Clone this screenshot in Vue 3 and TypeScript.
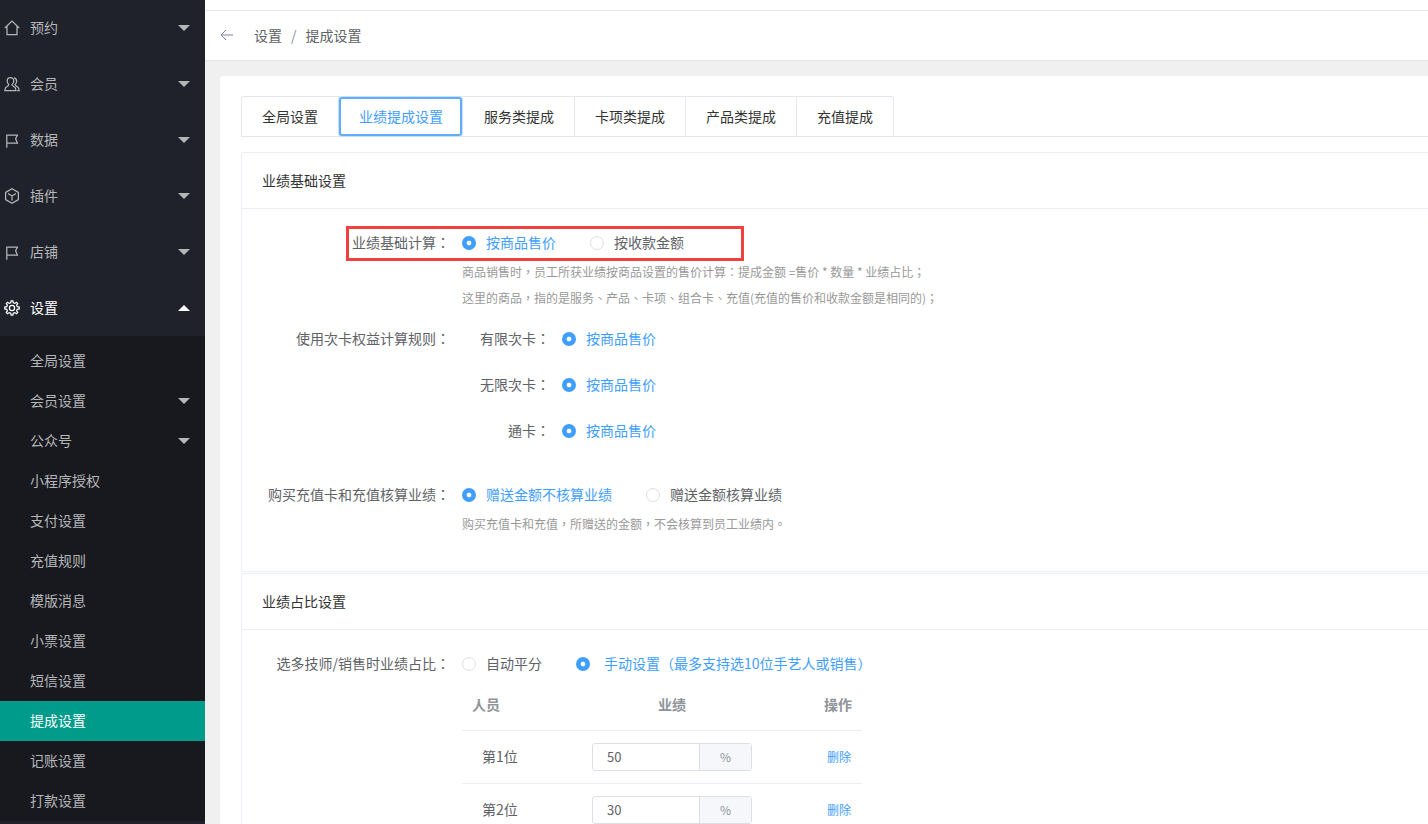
<script setup lang="ts">
const topMenu = [
  { name: '预约', icon: 'home' },
  { name: '会员', icon: 'user' },
  { name: '数据', icon: 'flag' },
  { name: '插件', icon: 'cube' },
  { name: '店铺', icon: 'flag' },
]
const subMenu = [
  { name: '全局设置' },
  { name: '会员设置', arrow: true },
  { name: '公众号', arrow: true },
  { name: '小程序授权' },
  { name: '支付设置' },
  { name: '充值规则' },
  { name: '模版消息' },
  { name: '小票设置' },
  { name: '短信设置' },
  { name: '提成设置', active: true },
  { name: '记账设置' },
  { name: '打款设置' },
]
const tabs = ['全局设置', '业绩提成设置', '服务类提成', '卡项类提成', '产品类提成', '充值提成']
const cardRules = ['有限次卡', '无限次卡', '通卡']
const ratios = [
  { name: '第1位', value: 50 },
  { name: '第2位', value: 30 },
]

function gearPath(): string {
  const teeth = 8
  const pts: string[] = []
  for (let i = 0; i < teeth; i++) {
    const a = (i / teeth) * Math.PI * 2
    const s = (Math.PI * 2) / teeth
    const p = (r: number, t: number) =>
      `${(8 + r * Math.cos(a + t * s)).toFixed(2)} ${(8 + r * Math.sin(a + t * s)).toFixed(2)}`
    pts.push(`${i === 0 ? 'M' : 'L'}${p(5.4, -0.3)}`, `L${p(7.3, -0.16)}`, `L${p(7.3, 0.16)}`, `L${p(5.4, 0.3)}`)
  }
  return pts.join(' ') + ' Z'
}
const gear = gearPath()
</script>

<template>
  <div class="page">
    <aside class="sidebar">
      <div v-for="m in topMenu" :key="m.name" class="top-item">
        <svg class="ico" viewBox="0 0 16 16" fill="none" stroke="currentColor" stroke-width="1.25">
          <template v-if="m.icon === 'home'">
            <path d="M.8 8 L8 1 L15.2 8 M3 6.5 V14.5 H13 V6.5" />
          </template>
          <template v-else-if="m.icon === 'user'">
            <path d="M6.5 1.5 C4.3 1.5 3.2 3.2 3.2 5 C3.2 6.6 4 7.8 4.8 8.6 C4.8 9.4 4.2 10 3 10.5 C1.6 11.1 1 12.2 .8 14.5 H12 C11.8 12.2 11.2 11.1 9.8 10.5 C8.6 10 8 9.4 8 8.6 C8.9 7.8 9.8 6.6 9.8 5 C9.8 3.2 8.7 1.5 6.5 1.5 Z" />
            <path d="M10 1.8 C12 2.3 12.8 3.8 12.6 5.5 C12.5 6.8 11.9 7.8 11.1 8.6 C11.2 9.4 11.8 9.9 12.9 10.4 C14.3 11 15 12.2 15.2 14.5 H13.2" />
          </template>
          <template v-else-if="m.icon === 'flag'">
            <path d="M2.8 15.8 V3 H13.4 L11.6 6.8 L13.4 11 H2.8" />
          </template>
          <template v-else>
            <path d="M8 .8 L14.4 4.4 V11.6 L8 15.2 L1.6 11.6 V4.4 Z M4 5.5 L8 8 L12 5.5 M8 8 V12.6" />
          </template>
        </svg>
        <span class="top-name">{{ m.name }}</span>
        <i class="arrow down"></i>
      </div>
      <div class="top-item open">
        <svg class="ico" viewBox="0 0 16 16" fill="none" stroke="currentColor" stroke-width="1.25">
          <circle cx="8" cy="8" r="2.6" />
          <path :d="gear" />
        </svg>
        <span class="top-name">设置</span>
        <i class="arrow up"></i>
      </div>
      <div class="sub-menu">
        <div v-for="s in subMenu" :key="s.name" class="sub-item" :class="{ active: s.active }">
          <span>{{ s.name }}</span>
          <i v-if="s.arrow" class="arrow down"></i>
        </div>
      </div>
    </aside>

    <main class="main">
      <div class="strip"></div>
      <div class="crumbs">
        <svg class="back" viewBox="0 0 14 12" fill="none" stroke="#7a84a0" stroke-width="1">
          <path d="M13 6 H1 M6 1 L1 6 L6 11" />
        </svg>
        <span class="crumb">设置</span>
        <span class="sep">/</span>
        <span class="crumb">提成设置</span>
      </div>

      <div class="content">
        <div class="panel">
          <div class="tabs">
            <div v-for="(t, i) in tabs" :key="t" class="tab" :class="{ current: i === 1 }">{{ t }}</div>
          </div>

          <section class="card">
            <h3 class="card-title">业绩基础设置</h3>
            <div class="card-body">
              <div class="form-row">
                <div class="highlight">
                  <label class="row-label">业绩基础计算：</label>
                  <span class="radio on"><i></i><b>按商品售价</b></span>
                  <span class="radio gap34"><i></i><b>按收款金额</b></span>
                </div>
              </div>
              <p class="hint h1">商品销售时，员工所获业绩按商品设置的售价计算：提成金额 =售价 * 数量 * 业绩占比；</p>
              <p class="hint">这里的商品，指的是服务、产品、卡项、组合卡、充值(充值的售价和收款金额是相同的)；</p>

              <div class="rules">
                <label class="row-label rules-label">使用次卡权益计算规则：</label>
                <div class="rules-list">
                  <div v-for="r in cardRules" :key="r" class="rule">
                    <label class="rule-label">{{ r }}：</label>
                    <span class="radio on"><i></i><b>按商品售价</b></span>
                  </div>
                </div>
              </div>

              <div class="form-row recharge">
                <label class="row-label">购买充值卡和充值核算业绩：</label>
                <span class="radio on"><i></i><b>赠送金额不核算业绩</b></span>
                <span class="radio gap34"><i></i><b>赠送金额核算业绩</b></span>
              </div>
              <p class="hint h2">购买充值卡和充值，所赠送的金额，不会核算到员工业绩内。</p>
            </div>
          </section>

          <section class="card second">
            <h3 class="card-title">业绩占比设置</h3>
            <div class="card-body">
              <div class="form-row">
                <label class="row-label">选多技师/销售时业绩占比：</label>
                <span class="radio"><i></i><b>自动平分</b></span>
                <span class="radio gap34 on wide"><i></i><b>手动设置（最多支持选10位手艺人或销售）</b></span>
              </div>
              <div class="table">
                <div class="thead">
                  <span class="c1">人员</span>
                  <span class="c2">业绩</span>
                  <span class="c3">操作</span>
                </div>
                <div v-for="x in ratios" :key="x.name" class="tr">
                  <span class="c1 who">{{ x.name }}</span>
                  <span class="c2 group">
                    <span class="inp">{{ x.value }}</span>
                    <span class="addon">%</span>
                  </span>
                  <a class="c3 del">删除</a>
                </div>
              </div>
            </div>
          </section>
        </div>
      </div>
    </main>
  </div>
</template>

<style>
html, body { margin: 0; height: 100%; overflow: hidden; }
</style>

<style scoped>
.page {
  display: flex;
  width: 1428px;
  height: 824px;
  overflow: hidden;
  font-family: "Noto Sans CJK SC", "Liberation Sans", sans-serif;
  font-size: 14px;
  color: #606266;
  background: #f0f0f0;
}
.sidebar {
  width: 205px;
  flex: none;
  background: #1f222b;
  color: #b5b6b8;
}
.top-item {
  position: relative;
  height: 56px;
  display: flex;
  align-items: center;
}
.top-item.open { color: #fff; }
.ico { width: 16px; height: 16px; margin-left: 4px; flex: none; }
.top-name { margin-left: 10px; padding-bottom: 2px; }
.arrow {
  position: absolute;
  right: 15px;
  top: 50%;
  margin-top: -3px;
  width: 0;
  height: 0;
  border-left: 6px solid transparent;
  border-right: 6px solid transparent;
}
.arrow.down { border-top: 6px solid #b5b6b8; }
.arrow.up { border-bottom: 6px solid #fff; }
.sub-menu {
  background: #18191f;
  padding-top: 5px;
}
.sub-item {
  position: relative;
  height: 40px;
  line-height: 38px;
  padding-left: 30px;
}
.sub-item.active { background: #009b8a; color: #fff; }

.main { flex: 1; min-width: 0; }
.strip { height: 10px; background: #fff; border-bottom: 1px solid #e8e8ea; }
.crumbs {
  height: 49px;
  box-sizing: border-box;
  background: #fff;
  display: flex;
  align-items: center;
  padding-left: 15px;
  padding-bottom: 2px;
  box-shadow: 0 1px 2px rgba(0,0,0,.05);
}
.back { width: 14px; height: 12px; margin-right: 20px; }
.crumb { color: #606266; }
.sep { margin: 0 9px; color: #8a8f9c; }
.content { padding: 16px 0 0 15px; }
.panel {
  background: #fff;
  border-radius: 4px 0 0 0;
  padding: 20px 0 0 21px;
  height: 800px;
}
.tabs {
  display: flex;
  height: 40px;
  border-bottom: 1px solid #e4e7ef;
}
.tab {
  height: 40px;
  box-sizing: border-box;
  padding: 0 20px;
  line-height: 38px;
  color: #333;
  border: 1px solid #e4e7ef;
  border-left: 0;
  border-bottom: 0;
}
.tab:first-child { border-left: 1px solid #e4e7ef; border-radius: 3px 0 0 0; padding-right: 21px; }
.tab:last-child { border-radius: 0 3px 0 0; }
.tab:nth-child(3) { padding-left: 22px; }
.tab.current {
  position: relative;
  color: #409eff;
  height: 39px;
  line-height: 35px;
  margin-top: 1px;
  margin-left: -1px;
  width: 123px;
  flex: none;
  border: 2px solid #63acf9;
  border-radius: 3px;
  box-shadow: 0 0 0 1px #c4e0fd;
  padding: 0 17px 0 18px;
}
.card {
  margin-top: 15px;
  border: 1px solid #ebeef5;
  border-right: 0;
  border-radius: 3px 0 0 3px;
  height: 420px;
  box-sizing: border-box;
}
.card.second { margin-top: 1px; height: 300px; }
.card-title {
  margin: 0;
  height: 55px;
  line-height: 55px;
  padding-left: 20px;
  font-size: 14px;
  font-weight: 400;
  color: #333;
  border-bottom: 1px solid #ebeef5;
}
.card-body { padding-left: 220px; padding-top: 16px; }
.form-row { display: flex; align-items: center; height: 36px; position: relative; }
.row-label {
  position: absolute;
  right: calc(100% + 12px);
  white-space: nowrap;
  color: #606266;
  padding-bottom: 2px;
  font-family: "Noto Sans CJK TC", "Noto Sans CJK SC", sans-serif;
}
.highlight {
  display: flex;
  align-items: center;
  position: relative;
  height: 36px;
}
.highlight::before {
  content: "";
  position: absolute;
  left: -116px;
  top: 1px;
  width: 398px;
  height: 35px;
  box-sizing: border-box;
  border: 3px solid #f04040;
}
.radio {
  position: relative;
  display: inline-flex;
  align-items: center;
  white-space: nowrap;
  color: #606266;
}
.radio b { font-weight: 400; padding-bottom: 2px; }
.radio i {
  width: 14px;
  height: 14px;
  box-sizing: border-box;
  border-radius: 50%;
  border: 1px solid #dcdfe6;
  background: #fff;
  margin-right: 10px;
  flex: none;
}
.radio.wide i { margin-right: 14px; }
.radio.on { color: #409eff; }
.radio.on i { border: 0; background: radial-gradient(circle, #fff 0 2px, #409eff 2.7px); }
.gap34 { margin-left: 34px; }
.hint {
  margin: 0;
  font-size: 12px;
  line-height: 26px;
  color: #999;
  white-space: nowrap;
  font-family: "Noto Sans CJK TC", "Noto Sans CJK SC", sans-serif;
}
.hint.h1 { margin-top: -2px; }
.rules { position: relative; margin-top: 5px; }
.rules-label { top: 12px; line-height: 20px; }
.rule { height: 46px; display: flex; align-items: center; padding-left: 100px; position: relative; }
.rule-label {
  position: absolute;
  right: calc(100% - 88px);
  white-space: nowrap;
  color: #606266;
  padding-bottom: 2px;
  font-family: "Noto Sans CJK TC", "Noto Sans CJK SC", sans-serif;
}
.rules-list { width: 600px; }
.recharge { margin-top: 23px; }
.hint.h2 { line-height: 22px; }
.table { width: 400px; }
.thead {
  display: flex;
  align-items: center;
  height: 48px;
  border-bottom: 1px solid #ebeef5;
  font-weight: 700;
  color: #909399;
}
.tr {
  display: flex;
  align-items: center;
  height: 52px;
  border-bottom: 1px solid #ebeef5;
}
.thead span { padding-bottom: 4px; }
.who, .del { padding-bottom: 2px; }
.c1 { width: 130px; box-sizing: border-box; padding-left: 10px; }
.c2 { width: 160px; text-align: center; }
.c3 { width: 110px; box-sizing: border-box; text-align: right; padding-right: 10px; }
.who { padding-left: 20px; }
.group { display: flex; height: 28px; box-sizing: border-box; border: 1px solid #dcdfe6; border-radius: 3px; font-size: 13px; }
.inp { flex: 1; text-align: left; padding-left: 14px; line-height: 26px; color: #606266; }
.addon { width: 51px; background: #f5f7fa; border-left: 1px solid #dcdfe6; line-height: 26px; color: #909399; font-size: 12px; }
.del { color: #409eff; font-size: 12px; padding-right: 11px; }
</style>
